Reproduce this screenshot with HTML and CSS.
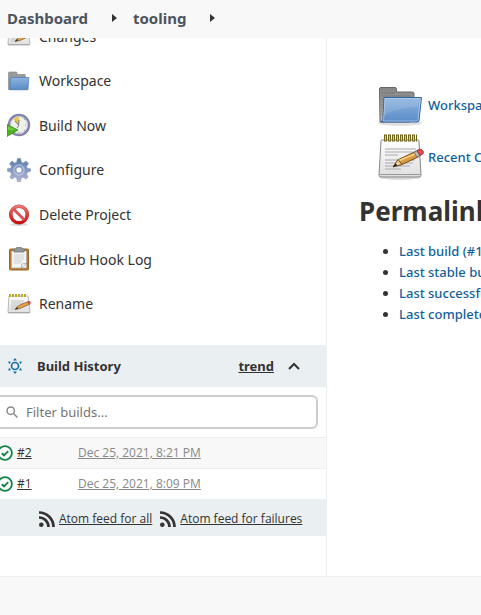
FILE: index.html
```html
<!DOCTYPE html>
<html lang="en">
<head>
<meta charset="utf-8">
<title>tooling [Jenkins]</title>
<link rel="stylesheet" href="styles.css">
</head>
<body>
<svg class="defs" aria-hidden="true">
  <defs>
    <linearGradient id="blue" x1="0" y1="0" x2="0" y2="1"><stop offset="0" stop-color="#8db4de"/><stop offset="1" stop-color="#5b8cc8"/></linearGradient>
    <linearGradient id="grey" x1="0" y1="0" x2="0" y2="1"><stop offset="0" stop-color="#858585"/><stop offset="1" stop-color="#b5b5b5"/></linearGradient>
    <linearGradient id="paper" x1="0" y1="0" x2="0" y2="1"><stop offset="0" stop-color="#fff"/><stop offset="1" stop-color="#dedede"/></linearGradient>
    <linearGradient id="gear" x1="0" y1="0" x2="0" y2="1"><stop offset="0" stop-color="#577cae"/><stop offset="1" stop-color="#b3b4d6"/></linearGradient>
    <linearGradient id="red" x1="0" y1="0" x2="0" y2="1"><stop offset="0" stop-color="#ea7777"/><stop offset="1" stop-color="#c40f0f"/></linearGradient>
    <symbol id="folder" viewBox="0 0 48 48">
      <ellipse cx="24" cy="42" rx="22" ry="3" fill="#000" opacity=".12"/>
      <path d="M4 41 3.500 8q0-1.500 1.500-1.500h14q1.500 0 1.500 2v2.500h16q1.500 0 1.500 2V30L34 41z" fill="url(#grey)" stroke="#666"/>
      <path d="M5.500 12h13M5.500 15h30M5.500 18h6M5.500 21h4M5.500 24h4M5.500 27h3M5.500 30h3M5.500 33h2" stroke="#666" opacity=".6"/>
      <path d="M8 16.500h37.500L43 39.500q-.3 1.500-2 1.500H5q1.700-.8 2-3z" fill="url(#blue)" stroke="#3566a5"/>
      <path d="M9 17.500h35.300L42 38.500q-.3 1.500-1.500 1.500H7.500z" fill="none" stroke="#b8d2ee" opacity=".7"/>
      <path d="M9 18h34l-1 8Q24 26 8 34z" fill="#fff" opacity=".12"/>
    </symbol>
    <symbol id="folder-small" viewBox="0 0 24 24">
      <ellipse cx="12" cy="21" rx="10" ry="1.500" opacity=".1"/>
      <path d="M1.500 20.500V4q0-1 1-1h6.500q1 0 1 1v1.500h7.500q1 0 1 1V20z" fill="#999" stroke="#8a8a8a" stroke-width=".7"/>
      <path d="M3.500 8.500h18.300L21 20.500H2.500z" fill="url(#blue)" stroke="#5380b8" stroke-width=".8"/>
    </symbol>
    <symbol id="notepad" viewBox="0 0 48 48">
      <ellipse cx="24" cy="44" rx="21" ry="3" fill="#000" opacity=".15"/>
      <path d="M6 7h36q1 0 1 1l2 34q0 2-2 2H5q-2 0-2-2L5 8q0-1 1-1z" fill="url(#paper)" stroke="#858585"/>
      <path d="M4 41.500h40" stroke="#999"/>
      <path d="M9 16h31M9 19h28M9 22h13M9 27h30M9 30h28M9 33h25M9 36h16" stroke="#aaa"/>
      <path d="M8 5h33" stroke="#6f6419" stroke-width="7" stroke-dasharray="3 1"/>
      <path d="M9 5h31" stroke="#efd82b" stroke-width="5" stroke-dasharray="1 3"/>
      <path d="m17.500 33.500 5-7 17-8 3.500 5-17 8z" fill="#d99b43" stroke="#754d19"/>
      <path d="m22 27 17-7 1 1.500-17 7z" fill="#f4cc83"/>
      <path d="m17 34 5-7.500 4 5z" fill="#edcf98" stroke="#755020"/><path d="m17 34 2.500-3.500 2 2z" fill="#222"/>
      <path d="m38 19 3 5 3-1.500-3-5z" fill="#bbb" stroke="#777"/><path d="m41 17.500 3 5 2.500-1.300q1.500-1 .5-3t-3-2z" fill="#e05057" stroke="#a92e34"/>
    </symbol>
    <symbol id="rename" viewBox="0 0 24 24">
      <path d="M2 4h19l2 16q0 1-1 1H2q-1 0-1-1z" fill="url(#paper)" stroke="#bbb"/>
      <path d="M1 20.500h22" stroke="#aaa"/><path d="M2 3.500h18" stroke="#b9a832" stroke-width="3" stroke-dasharray="2 1"/>
      <path d="M4 9h13M4 11h12M4 13h7M4 15h7M4 17h6" stroke="#c4c4c4"/>
      <path d="m8 17.500 3.500-4 10-4 1.500 2.500-10 4.500z" fill="#dfa44a" stroke="#8b602c" stroke-width=".8"/>
      <path d="m8 17.500 2-2.500 1.200 1.500z" fill="#333"/><path d="m20 10 2-1q2 0 1.800 2L22 12.500z" fill="#d9464a"/>
    </symbol>
    <symbol id="clock" viewBox="0 0 24 24">
      <circle cx="12" cy="12" r="10" fill="#f0efea" stroke="#8484a8" stroke-width="2.500"/>
      <circle cx="12" cy="12" r="8.500" fill="none" stroke="#cac9d9"/>
      <path d="M11.500 12 6.500 6.500Q8.500 3.500 12 4z" fill="#e8c64c"/><path d="m8 8 3.500 4 .5-5M12 12l-2 3" fill="none" stroke="#666" stroke-width=".8"/>
      <path d="M18 12h1M12 19v1M17 7l1-1M17 17l1 1" stroke="#999"/>
      <path d="M0 11.500 11 17 0 23.500z" fill="#4db51c" stroke="#2d8a14" stroke-width=".7"/><path d="m1 13 7.500 4H1z" fill="#8ad958" opacity=".6"/>
    </symbol>
    <symbol id="cog" viewBox="0 0 24 24">
      <path d="M10.500.5h3l.9 3.700 2 .8 2.600-2 2.500 2.700-2 2.700.8 1.800 3.200.6v2.500l-3.200.9-.8 1.900 1.500 3.100-2.200 1.800-2.700-2-1.700.8-.9 3.700h-3l-.9-3.700-1.700-.8-2.700 2L3 19.200l1.500-3.100-.8-1.900-3.200-.9v-2.500l3.200-.6.8-1.800-2-2.700L5 3l2.600 2 2-.8z" fill="url(#gear)" stroke="#8793b8" stroke-width=".6"/>
      <circle cx="12" cy="12" r="5" fill="none" stroke="#e1e4f3" opacity=".5" stroke-width="1.500"/><circle cx="12" cy="12" r="3" fill="#fff" stroke="#8d96bb" stroke-width=".7"/>
    </symbol>
    <symbol id="stop" viewBox="0 0 24 24">
      <ellipse cx="12" cy="21.500" rx="9" ry="1.500" opacity=".15"/>
      <circle cx="12" cy="11.500" r="8.300" fill="#fff" stroke="#c03a3a" stroke-width="3.500"/><circle cx="12" cy="11.500" r="8.300" fill="none" stroke="url(#red)" stroke-width="2.800"/>
      <path d="m6.500 6 11 11" stroke="#dc5050" stroke-width="2.800"/>
    </symbol>
    <symbol id="clipboard" viewBox="0 0 24 24">
      <rect x="2.500" y="2" width="19" height="21" rx="1" fill="#b9782f" stroke="#9a672a"/>
      <path d="M4.500 4h15v17h-15z" fill="#f3f3f3" stroke="#aaa" stroke-width=".6"/>
      <path d="M7 8h10M7 10h10M7 12h10M7 14h8M7 16h7" stroke="#d0d0d0"/>
      <path d="M14 21.500 15 17l5-1z" fill="#fff" stroke="#888" stroke-width=".6"/><path d="M9.500.5h5V2H17v3H7V2h2.500z" fill="#92999a" stroke="#697172" stroke-width=".7"/>
    </symbol>
    <symbol id="rss" viewBox="0 0 16 16">
      <circle cx="2.300" cy="13.700" r="2.300" fill="#333"/><path d="M0 6.500A9.500 9.500 0 0 1 9.500 16M0 1.500A14.500 14.500 0 0 1 14.500 16" fill="none" stroke="#333" stroke-width="2.700"/>
    </symbol>
    <symbol id="success" viewBox="0 0 16 16">
      <circle cx="8" cy="8" r="6.900" fill="#fff" stroke="#138347" stroke-width="1.800"/><path d="m4.800 8.200 2.200 2.100 4.200-4.200" fill="none" stroke="#138347" stroke-width="1.900"/>
    </symbol>
  </defs>
</svg>
<nav class="breadcrumbs" aria-label="Breadcrumb">
  <a href="#">Dashboard</a>
  <svg class="arrow" viewBox="0 0 5 8"><path d="M0 0 5 4 0 8z"/></svg>
  <a href="#">tooling</a>
  <svg class="arrow" viewBox="0 0 5 8"><path d="M0 0 5 4 0 8z"/></svg>
</nav>
<div class="page">
  <aside class="side">
    <nav class="tasks">
      <a href="#"><svg><use href="#rename"/></svg>Changes</a>
      <a href="#"><svg><use href="#folder-small"/></svg>Workspace</a>
      <a href="#"><svg><use href="#clock"/></svg>Build Now</a>
      <a href="#"><svg><use href="#cog"/></svg>Configure</a>
      <a href="#"><svg><use href="#stop"/></svg>Delete Project</a>
      <a href="#"><svg><use href="#clipboard"/></svg>GitHub Hook Log</a>
      <a href="#"><svg><use href="#rename"/></svg>Rename</a>
    </nav>
    <section class="history">
      <header class="history-head">
        <svg class="weather" viewBox="0 0 16 16"><circle cx="8" cy="8" r="3.500" fill="none" stroke="#1670a6" stroke-width="1.700"/><path d="m8 0 2 2.500H6zM8 16l2-2.500H6zM1 3.500l3 .3-1.700 2.500zM15 3.500l-3 .3 1.700 2.500zM1 12.500l3-.3-1.700-2.500zM15 12.500l-3-.3 1.700-2.500z" fill="#1670a6"/></svg>
        <h2>Build History</h2>
        <a href="#">trend</a>
        <button type="button" aria-label="Collapse"><svg viewBox="0 0 12 8"><path d="m1 7 5-5 5 5" fill="none" stroke="#333" stroke-width="2"/></svg></button>
      </header>
      <div class="search">
        <svg viewBox="0 0 12 12"><circle cx="4.700" cy="4.700" r="3.700"/><path d="m7.500 7.500 4 4"/></svg>
        <input type="search" placeholder="Filter builds..." aria-label="Filter builds">
      </div>
      <table class="builds">
        <tr><td class="num"><svg><use href="#success"/></svg><a href="#">#2</a></td><td><a href="#">Dec 25, 2021, 8:21 PM</a></td></tr>
        <tr><td class="num"><svg><use href="#success"/></svg><a href="#">#1</a></td><td><a href="#">Dec 25, 2021, 8:09 PM</a></td></tr>
      </table>
      <div class="feeds">
        <svg><use href="#rss"/></svg><a href="#">Atom feed for all</a>
        <svg><use href="#rss"/></svg><a href="#">Atom feed for failures</a>
      </div>
    </section>
  </aside>
  <main class="main">
    <div class="shortcuts">
      <a href="#"><svg><use href="#folder"/></svg>Workspace</a>
      <a href="#"><svg><use href="#notepad"/></svg>Recent Changes</a>
    </div>
    <h1>Permalinks</h1>
    <ul>
      <li><a href="#">Last build (#1)</a></li>
      <li><a href="#">Last stable build</a></li>
      <li><a href="#">Last successful build</a></li>
      <li><a href="#">Last completed build</a></li>
    </ul>
  </main>
</div>
<footer class="footer"></footer>
</body>
</html>
```
FILE: styles.css
```css
* { box-sizing: border-box; }
body {
  margin: 0;
  min-height: 100vh;
  display: flex;
  flex-direction: column;
  overflow: hidden;
  background: #fff;
  color: #333;
  font: 500 13px/21px "Noto Sans", "Open Sans", sans-serif;
  white-space: nowrap;
}
a { color: inherit; }
svg { flex: none; }
.defs { position: absolute; width: 0; height: 0; }

.breadcrumbs {
  position: relative;
  z-index: 1;
  display: flex;
  align-items: center;
  height: 38px;
  padding: 0 0 2px 7px;
  background: #f8f8f8;
  color: #4d545d;
  font-size: 15px;
  font-weight: 700;
}
.breadcrumbs a { text-decoration: none; }
.arrow { width: 5px; height: 8px; margin: 0 16px 0 24px; fill: #333; }

.page {
  display: grid;
  grid-template-columns: 327px minmax(0, 1fr);
}
.side { padding-bottom: 40px; border-right: 1px solid #eaeff2; }
.tasks {
  display: grid;
  grid-auto-rows: 1fr;
  min-height: 312px;
  margin: -24px 0 19px;
  font-size: 14px;
  font-weight: 400;
}
.tasks a {
  display: flex;
  align-items: center;
  gap: 8px;
  padding-left: 7px;
  text-decoration: none;
}
.tasks svg { width: 24px; height: 24px; }

.history-head {
  display: flex;
  align-items: center;
  height: 42px;
  padding: 0 24px 0 7px;
  background: #eaeff2;
}
.history-head h2 { flex: 1; margin: 0 0 0 14px; font-size: 13px; line-height: 20px; }
.history-head a { font-weight: 700; line-height: 20px; }
.weather { width: 16px; height: 16px; }
.history-head button {
  display: flex;
  margin-left: 12px;
  padding: 2px;
  border: 0;
  background: none;
}
.history-head button svg { width: 12px; height: 8px; }
.search {
  display: flex;
  align-items: center;
  gap: 8px;
  height: 34px;
  margin: 8px 8px 8px -4px;
  padding-left: 8px;
  border: 2px solid #ccc;
  border-radius: 6px;
}
.search svg { width: 12px; height: 12px; fill: none; stroke: #8a8a8a; stroke-width: 1.5; }
.search input {
  flex: 1;
  min-width: 0;
  padding: 0;
  border: 0;
  outline: 0;
  background: none;
  font: inherit;
  font-weight: 400;
}
.search input::placeholder { color: #757575; }

.builds,
.feeds {
  font-family: "Open Sans", "Noto Sans", sans-serif;
  font-size: 12px;
  font-weight: 400;
}
.builds {
  width: 100%;
  border-spacing: 0;
}
.builds td {
  height: 31px;
  padding: 0 0 2px;
  border-top: 1px solid #eaeff2;
  color: #888;
}
.builds tr:first-child { background: #f8f8f8; }
.builds .num { width: 78px; color: #333; }
.num svg { width: 16px; height: 16px; margin: 0 4px 0 -3px; vertical-align: middle; }
.feeds {
  display: flex;
  align-items: center;
  height: 37px;
  padding: 2px 0 0 39px;
  background: #eaeff2;
}
.feeds svg { width: 16px; height: 16px; margin-right: 4px; }
.feeds a { margin-right: 8px; }

.main { padding: 43px 0 0 32px; overflow: hidden; }
.main a { color: #135f9b; text-decoration: none; }
.shortcuts { display: grid; gap: 4px; padding-left: 17px; }
.shortcuts a { display: flex; align-items: center; gap: 4px; }
.shortcuts svg { width: 48px; height: 48px; }
.main h1 { margin: 12px 0; font-size: 26px; line-height: 36px; }
.main ul { margin: 0; padding-left: 40px; }
.footer { flex: 1; border-top: 1px solid #eaeff2; background: #f8f8f8; }
```
